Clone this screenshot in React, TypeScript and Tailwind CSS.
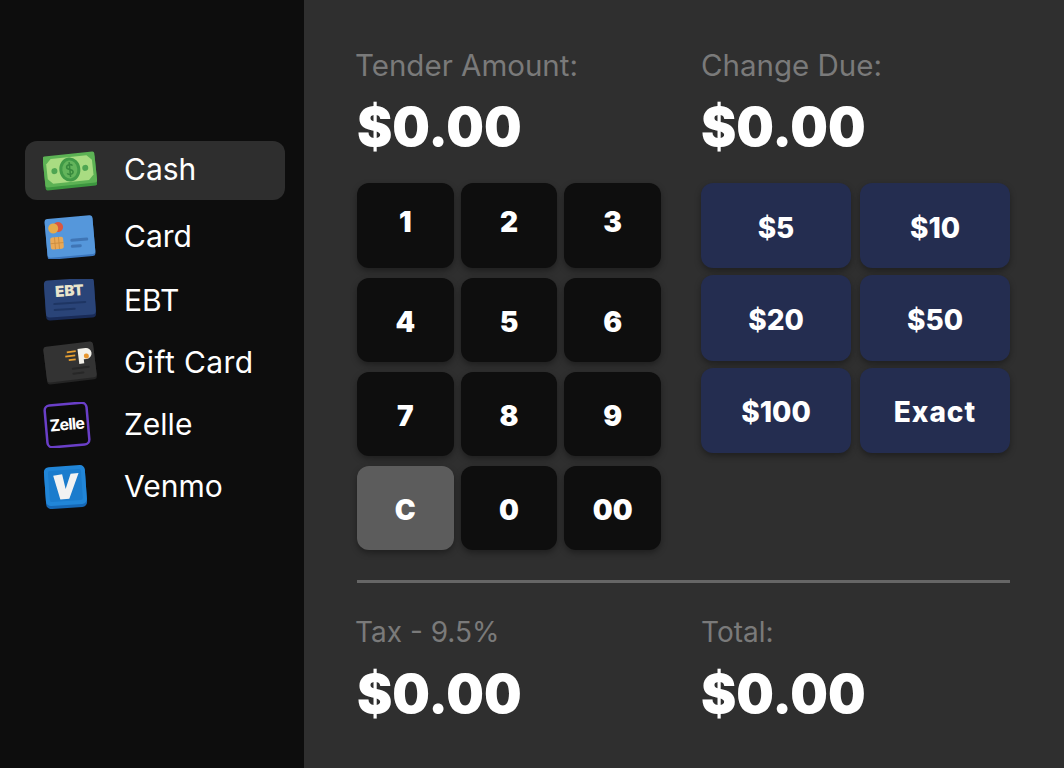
const FONT = "font-['Inter','Liberation_Sans',sans-serif]";

const CashIcon = () => (
  <svg viewBox="0 0 54 44" className="h-[44px] w-[54px]">
    <g transform="rotate(-6 27 22)">
      <rect x="1" y="8" width="52" height="31" rx="2" fill="#3c963f" />
      <rect x="1" y="5" width="52" height="31" rx="2" fill="#5cb254" />
      <path d="M9 8h36l5 5v15l-5 5H9l-5-5V13z" fill="#a9dc82" />
      <ellipse cx="27" cy="20.500" rx="10.500" ry="12" fill="#419a47" />
      <ellipse cx="27" cy="20.500" rx="7.500" ry="9" fill="#63b45b" />
      <path d="M30 17c-1-2-6-2-6 1 0 3 6 2 6 5 0 3-5 3-6 1M27 13v15" fill="none" stroke="#37893d" strokeWidth="1.500" />
      <circle cx="11.500" cy="20.500" r="3" fill="#4fa552" />
      <circle cx="42.500" cy="20.500" r="3" fill="#4fa552" />
    </g>
  </svg>
);

const CardIcon = () => (
  <svg viewBox="0 0 54 44" className="h-[44px] w-[54px]">
    <g transform="rotate(-5 27 22)">
      <rect x="3" y="3" width="48" height="40" rx="3" fill="#3a75bd" />
      <rect x="3" y="2" width="48" height="39" rx="3" fill="#5597db" />
      <circle cx="16" cy="11" r="5" fill="#d9573f" />
      <circle cx="11" cy="12" r="5" fill="#e5ab4a" />
      <rect x="7" y="21" width="13" height="12" rx="2" fill="#e9a957" />
      <path d="M11.500 21v12M15.500 21v12M7 27h13" stroke="#c98a3e" strokeWidth="0.800" />
      <rect x="27" y="24" width="18" height="3" rx="1.500" fill="#3f75b5" />
      <rect x="27" y="30" width="11" height="3" rx="1.500" fill="#3f75b5" />
    </g>
  </svg>
);

const EbtIcon = () => (
  <svg viewBox="0 0 54 44" className="h-[44px] w-[54px]">
    <g transform="translate(0 -2) rotate(-4 27 22)">
      <rect x="2" y="3" width="50" height="39" rx="4" fill="#192b57" />
      <rect x="2" y="2" width="50" height="37" rx="4" fill="#2a4478" />
      <text x="27" y="19" textAnchor="middle" fontFamily="Inter" fontWeight="900" fontSize="15" fill="#e9e4cc">EBT</text>
      <rect x="10" y="25" width="33" height="2" rx="1" fill="#1e3563" />
      <rect x="10" y="31" width="22" height="2" rx="1" fill="#1e3563" />
    </g>
  </svg>
);

const GiftIcon = () => (
  <svg viewBox="0 0 54 44" className="h-[44px] w-[54px]">
    <g transform="translate(0 -1) rotate(-7 27 22)">
      <rect x="2" y="5" width="50" height="37" rx="3" fill="#242424" />
      <rect x="2" y="4" width="50" height="36" rx="3" fill="#333333" />
      <path d="M25 12h9M23 16h10M26 20h7" stroke="#e8a032" strokeWidth="1.800" />
      <path d="M36 10h8a5 5 0 0 1 0 11h-3v4h-5z" fill="#f3f1ea" />
      <circle cx="44" cy="18" r="2.500" fill="#e8962e" />
      <rect x="28" y="28" width="18" height="2" rx="1" fill="#272727" />
      <rect x="28" y="33" width="12" height="2" rx="1" fill="#272727" />
    </g>
  </svg>
);

const ZelleIcon = () => (
  <svg viewBox="0 0 54 44" className="h-[46px] w-[54px]">
    <g transform="translate(-3 0) rotate(-5 27 22)">
      <rect x="6" y="1" width="42" height="42" rx="5" fill="#0b0b0b" stroke="#6a3fc8" strokeWidth="2.500" />
      <text x="27" y="27" textAnchor="middle" fontFamily="Inter" fontWeight="700" fontSize="16" letterSpacing="-0.800" fill="#ffffff">Zelle</text>
    </g>
  </svg>
);

const VenmoIcon = () => (
  <svg viewBox="0 0 54 44" className="h-[44px] w-[54px]">
    <g transform="translate(-4 0) rotate(-4 27 22)">
      <rect x="6" y="2" width="41" height="41" rx="5" fill="#1668b6" />
      <rect x="6" y="1" width="41" height="39" rx="5" fill="#2186d8" />
      <rect x="10" y="5" width="33" height="31" rx="2" fill="#1b7ccd" />
      <path d="M15 10l9-1 2.500 15 6-15 8 0-11 25h-9z" fill="#f2f2f2" />
    </g>
  </svg>
);

const payments = [
  { name: "Cash", icon: <CashIcon />, cls: "mb-[6px] h-[59px] rounded-xl bg-[#2e2e2e]", text: "mb-[3px]" },
  { name: "Card", icon: <CardIcon />, cls: "mb-[2px] h-[62px]", text: "mb-[1px]" },
  { name: "EBT", icon: <EbtIcon />, cls: "h-[62px]", text: "mb-[1px]" },
  { name: "Gift Card", icon: <GiftIcon />, cls: "h-[62px]", text: "mb-[1px] tracking-[0.4px]" },
  { name: "Zelle", icon: <ZelleIcon />, cls: "h-[62px]", text: "mb-[1px]" },
  { name: "Venmo", icon: <VenmoIcon />, cls: "h-[62px]", text: "mb-[1px]" },
];

const keys = ["1", "2", "3", "4", "5", "6", "7", "8", "9", "C", "0", "00"];
const amounts = ["$5", "$10", "$20", "$50", "$100", "Exact"];

const Stat = ({ label, small, right }: { label: string; small?: boolean; right?: boolean }) => (
  <div>
    <div
      className={`leading-[30px] text-[#7a7a7a] ${right ? "ml-0" : "-ml-[2px]"} ${small ? "text-[28px]" : "text-[29.5px]"}`}
    >
      {label}
    </div>
    <div className="mt-[15px] text-[53px] font-black leading-[64px] text-white">$0.00</div>
  </div>
);

export default function App() {
  return (
    <div className={`flex h-[768px] w-[1064px] overflow-hidden bg-[#2f2f2f] ${FONT}`}>
      {/* Payment types */}
      <aside className="w-[304px] shrink-0 bg-[#0d0d0d] pl-[25px] pr-[19px] pt-[141px]">
        {payments.map((p) => (
          <div key={p.name} className={`flex items-center pl-[18px] ${p.cls}`}>
            <div className="flex w-[54px] justify-center">{p.icon}</div>
            <span className={`ml-[27px] text-[30px] text-white ${p.text}`}>{p.name}</span>
          </div>
        ))}
      </aside>

      <main className="flex-1 pl-[53px] pr-[54px] pt-[50px]">
        <div className="grid grid-cols-[304px_309px] gap-x-[40px]">
          <Stat label="Tender Amount:" />
          <Stat label="Change Due:" right />
          {/* Keypad */}
          <div className="mt-[24px] grid h-[367px] grid-cols-3 grid-rows-[85px_84px_84px_84px] gap-x-[7px] gap-y-[10px]">
            {keys.map((k, i) => (
              <button
                key={k}
                className={`rounded-xl text-[28px] font-black text-white shadow-[0_3px_6px_rgba(0,0,0,0.35)] ${i < 3 ? "pb-[7px]" : "pt-[3px]"} ${k === "C" ? "bg-[#5c5c5c]" : "bg-[#0e0e0e]"}`}
              >
                {k}
              </button>
            ))}
          </div>
          {/* Quick amounts */}
          <div className="mt-[24px] grid h-[270px] grid-cols-2 grid-rows-3 gap-x-[9px] gap-y-[7px]">
            {amounts.map((a) => (
              <button
                key={a}
                className={`rounded-xl bg-[#242d50] pt-[4px] text-[28px] font-extrabold text-white shadow-[0_3px_6px_rgba(0,0,0,0.35)] ${a === "Exact" ? "tracking-[1px]" : ""}`}
              >
                {a}
              </button>
            ))}
          </div>
        </div>

        <div className="mt-[30px] h-[3px] bg-[#666666]" />

        <div className="mt-[34px] grid grid-cols-[304px_309px] gap-x-[40px]">
          <Stat label="Tax - 9.5%" small />
          <Stat label="Total:" small right />
        </div>
      </main>
    </div>
  );
}
